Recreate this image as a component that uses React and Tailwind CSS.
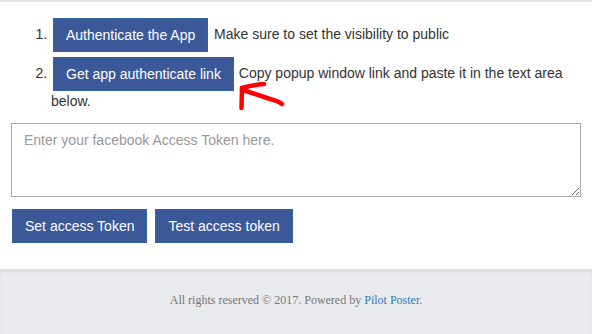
export default function App() {
  const btn =
    "inline-block bg-[#3b5998] border border-[#34649e] text-white px-3 py-[6px] leading-5 text-[14px] align-middle";

  return (
    <div className="min-h-[334px] flex flex-col bg-white font-['Liberation_Sans',Arial,sans-serif] text-[14px] text-[#333]">
      <div className="h-[2px] bg-[#e3e3e3]" />

      <div className="px-[11px] pt-[16px] pb-[26px] relative">
        <ol className="list-decimal pl-[40px] leading-5">
          <li className="mb-[5px]">
            <button className={btn + " ml-[2px]"}>Authenticate the App</button>{" "}
            <span className="ml-[2px]">Make sure to set the visibility to public</span>
          </li>
          <li>
            <button className={btn + " ml-[2px]"}>Get app authenticate link</button>{" "}
            <span className="relative z-10 ml-[1px]">
              Copy popup window link and paste it in the text area
            </span>
            <br />
            <span>below.</span>
          </li>
        </ol>

        {/* hand drawn arrow pointing at the link button */}
        <svg
          className="absolute left-[232px] top-[78px]"
          width="56"
          height="32"
          viewBox="0 0 56 32"
        >
          <g
            fill="none"
            stroke="#ff0000"
            strokeWidth="4.5"
            strokeLinecap="round"
            strokeLinejoin="round"
          >
            <path d="M10 8 L9.5 28" />
            <path d="M10 8 Q20 5 32 4" />
            <path d="M11 10 L38 19 Q46 21 50 24" />
          </g>
        </svg>

        <textarea
          className="block w-full h-[74px] mt-[12px] border border-[#aaa] px-[12px] py-[6px] text-[14px] leading-5 placeholder:text-[#999] outline-none"
          placeholder="Enter your facebook Access Token here."
        />

        <div className="flex gap-[8px] mt-[12px] px-[1px]">
          <button className={btn + " h-[34px]"}>Set access Token</button>
          <button className={btn + " h-[34px]"}>Test access token</button>
        </div>
      </div>

      <div className="flex-1 bg-[#e9eaed] border-t border-[#dcdcdf] shadow-[inset_0_2px_3px_rgba(0,0,0,0.05)] flex items-start justify-center pt-[21px]">
        <p className="font-['Liberation_Serif','Times_New_Roman',serif] text-[12px] text-[#777]">
          All rights reserved © 2017. Powered by{" "}
          <span className="text-[#337ab7]">Pilot Poster.</span>
        </p>
      </div>
    </div>
  );
}
